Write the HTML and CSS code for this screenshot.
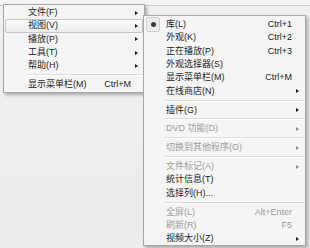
FILE: index.html
```html
<!DOCTYPE html>
<html lang="zh-CN">
<head>
<meta charset="utf-8">
<title>菜单</title>
<link rel="stylesheet" href="styles.css">
</head>
<body>
<div class="screen">
  <div class="toolbar"></div>
  <div class="menu menu-main">
    <div class="item"><span class="label">文件(F)</span><span class="key"></span><span class="arrow"></span></div>
    <div class="item hot"><span class="label">视图(V)</span><span class="key"></span><span class="arrow"></span></div>
    <div class="item"><span class="label">播放(P)</span><span class="key"></span><span class="arrow"></span></div>
    <div class="item"><span class="label">工具(T)</span><span class="key"></span><span class="arrow"></span></div>
    <div class="item"><span class="label">帮助(H)</span><span class="key"></span><span class="arrow"></span></div>
    <div class="sep"></div>
    <div class="item"><span class="label">显示菜单栏(M)</span><span class="key">Ctrl+M</span><span class="noarrow"></span></div>
  </div>
  <div class="menu menu-sub">
    <div class="item checked"><span class="check"><span class="dot"></span></span><span class="label">库(L)</span><span class="key">Ctrl+1</span><span class="noarrow"></span></div>
    <div class="item"><span class="label">外观(K)</span><span class="key">Ctrl+2</span><span class="noarrow"></span></div>
    <div class="item"><span class="label">正在播放(P)</span><span class="key">Ctrl+3</span><span class="noarrow"></span></div>
    <div class="item"><span class="label">外观选择器(S)</span><span class="key"></span><span class="noarrow"></span></div>
    <div class="item"><span class="label">显示菜单栏(M)</span><span class="key">Ctrl+M</span><span class="noarrow"></span></div>
    <div class="item"><span class="label">在线商店(N)</span><span class="key"></span><span class="arrow"></span></div>
    <div class="sep"></div>
    <div class="item"><span class="label">插件(G)</span><span class="key"></span><span class="arrow"></span></div>
    <div class="sep"></div>
    <div class="item off"><span class="label">DVD 功能(D)</span><span class="key"></span><span class="arrow"></span></div>
    <div class="sep"></div>
    <div class="item off"><span class="label">切换到其他程序(O)</span><span class="key"></span><span class="arrow"></span></div>
    <div class="sep"></div>
    <div class="item off"><span class="label">文件标记(A)</span><span class="key"></span><span class="arrow"></span></div>
    <div class="item"><span class="label">统计信息(T)</span><span class="key"></span><span class="noarrow"></span></div>
    <div class="item"><span class="label">选择列(H)...</span><span class="key"></span><span class="noarrow"></span></div>
    <div class="sep"></div>
    <div class="item off"><span class="label">全屏(L)</span><span class="key">Alt+Enter</span><span class="noarrow"></span></div>
    <div class="item off"><span class="label">刷新(R)</span><span class="key">F5</span><span class="noarrow"></span></div>
    <div class="item"><span class="label">视频大小(Z)</span><span class="key"></span><span class="arrow"></span></div>
  </div>
</div>
</body>
</html>
```

FILE: styles.css
```css
html, body {
  margin: 0;
  padding: 0;
}
body {
  font-family: "Liberation Sans", "Noto Sans CJK SC", sans-serif;
  font-size: 9px;
  color: #222;
}
.screen {
  position: relative;
  width: 310px;
  height: 248px;
  overflow: hidden;
  background: linear-gradient(180deg, #efefef 0%, #ececec 100%);
}
.toolbar {
  height: 5px;
  background: #f4f4f4;
  border-bottom: 1px solid #cfcfcf;
}
.menu {
  position: absolute;
  box-sizing: border-box;
  background: #f5f5f5;
  border: 1px solid #a6a6a6;
  padding: 1px 1px;
  box-shadow: 2px 2px 3px rgba(0, 0, 0, 0.28);
  display: flex;
  flex-direction: column;
}
.menu-main {
  left: 3px;
  top: 4px;
  width: 142px;
  z-index: 1;
}
.menu-sub {
  left: 143px;
  top: 15px;
  width: 163px;
  padding: 2px 1px 0;
  z-index: 2;
}
.item {
  position: relative;
  height: 13.3px;
  display: grid;
  grid-template-columns: 1fr auto 10px;
  align-items: center;
  padding-left: 22px;
  padding-right: 1px;
  box-sizing: border-box;
  border: 1px solid transparent;
  border-radius: 2px;
}
.menu-sub .item {
  padding-left: 20px;
}
.label {
  white-space: nowrap;
  line-height: 11px;
}
.key {
  white-space: nowrap;
  text-align: right;
  line-height: 11px;
}
.arrow {
  justify-self: center;
  width: 0;
  height: 0;
  border-top: 2.5px solid transparent;
  border-bottom: 2.5px solid transparent;
  border-left: 3px solid #1a1a1a;
}
.off {
  color: #9b9b9b;
}
.off .arrow {
  border-left-color: #8a8a8a;
}
.hot {
  border-color: #c4c4c4;
  background: linear-gradient(180deg, #fbfbfb 0%, #ececec 100%);
}
.check {
  position: absolute;
  left: 0px;
  top: -2px;
  width: 14px;
  height: 15px;
  box-sizing: border-box;
  border: 1px solid #cfcfcf;
  border-radius: 2px;
  background: #ececec;
  display: flex;
  align-items: center;
  justify-content: center;
}
.dot {
  width: 5px;
  height: 5px;
  border-radius: 50%;
  background: #3a3a3a;
}
.sep {
  height: 5.6px;
  display: flex;
  align-items: center;
  margin-left: 22px;
}
.menu-sub .sep {
  margin-left: 20px;
}
.sep::before {
  content: "";
  flex: 1;
  height: 0;
  border-top: 1px solid #dcdcdc;
  border-bottom: 1px solid #ffffff;
}
```
